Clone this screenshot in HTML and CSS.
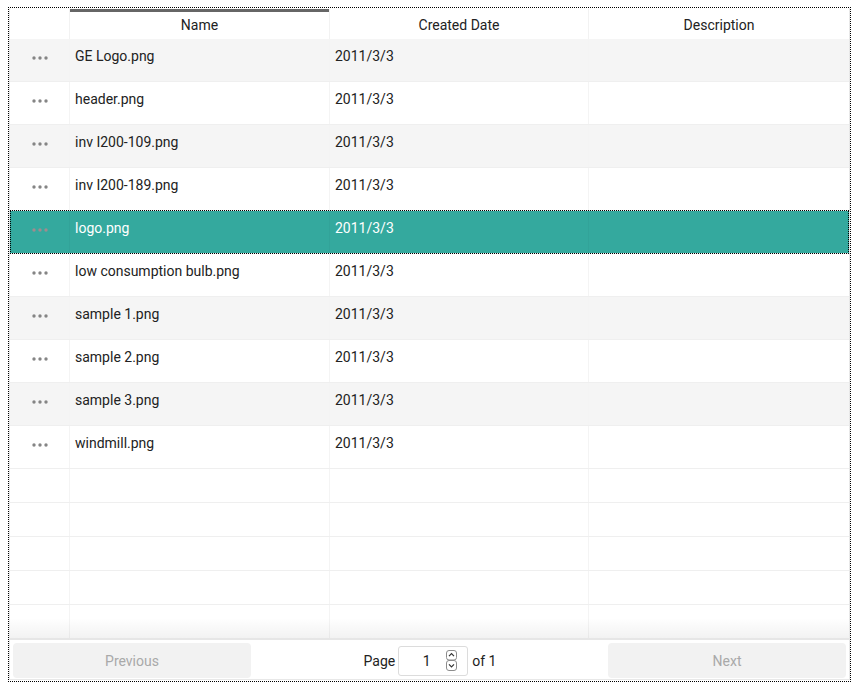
FILE: index.html
```html
<!DOCTYPE html>
<html>
<head>
<meta charset="utf-8">
<link rel="stylesheet" href="styles.css">
</head>
<body>
<div class="frame">
  <div class="grid">
    <div class="head">
      <div class="hcell"></div>
      <div class="hcell sorted">Name</div>
      <div class="hcell">Created Date</div>
      <div class="hcell last">Description</div>
    </div>
    <div class="body">
      <div class="row alt"><div class="cell act"><svg class="dots" width="16" height="4" viewBox="0 0 16 4"><circle cx="2" cy="2" r="1.7"/><circle cx="8" cy="2" r="1.7"/><circle cx="14" cy="2" r="1.7"/></svg></div><div class="cell">GE Logo.png</div><div class="cell">2011/3/3</div><div class="cell last"></div></div>
      <div class="row"><div class="cell act"><svg class="dots" width="16" height="4" viewBox="0 0 16 4"><circle cx="2" cy="2" r="1.7"/><circle cx="8" cy="2" r="1.7"/><circle cx="14" cy="2" r="1.7"/></svg></div><div class="cell">header.png</div><div class="cell">2011/3/3</div><div class="cell last"></div></div>
      <div class="row alt"><div class="cell act"><svg class="dots" width="16" height="4" viewBox="0 0 16 4"><circle cx="2" cy="2" r="1.7"/><circle cx="8" cy="2" r="1.7"/><circle cx="14" cy="2" r="1.7"/></svg></div><div class="cell">inv I200-109.png</div><div class="cell">2011/3/3</div><div class="cell last"></div></div>
      <div class="row"><div class="cell act"><svg class="dots" width="16" height="4" viewBox="0 0 16 4"><circle cx="2" cy="2" r="1.7"/><circle cx="8" cy="2" r="1.7"/><circle cx="14" cy="2" r="1.7"/></svg></div><div class="cell">inv I200-189.png</div><div class="cell">2011/3/3</div><div class="cell last"></div></div>
      <div class="row selected"><div class="cell act"><svg class="dots" width="16" height="4" viewBox="0 0 16 4"><circle cx="2" cy="2" r="1.7"/><circle cx="8" cy="2" r="1.7"/><circle cx="14" cy="2" r="1.7"/></svg></div><div class="cell">logo.png</div><div class="cell">2011/3/3</div><div class="cell last"></div></div>
      <div class="row"><div class="cell act"><svg class="dots" width="16" height="4" viewBox="0 0 16 4"><circle cx="2" cy="2" r="1.7"/><circle cx="8" cy="2" r="1.7"/><circle cx="14" cy="2" r="1.7"/></svg></div><div class="cell">low consumption bulb.png</div><div class="cell">2011/3/3</div><div class="cell last"></div></div>
      <div class="row alt"><div class="cell act"><svg class="dots" width="16" height="4" viewBox="0 0 16 4"><circle cx="2" cy="2" r="1.7"/><circle cx="8" cy="2" r="1.7"/><circle cx="14" cy="2" r="1.7"/></svg></div><div class="cell">sample 1.png</div><div class="cell">2011/3/3</div><div class="cell last"></div></div>
      <div class="row"><div class="cell act"><svg class="dots" width="16" height="4" viewBox="0 0 16 4"><circle cx="2" cy="2" r="1.7"/><circle cx="8" cy="2" r="1.7"/><circle cx="14" cy="2" r="1.7"/></svg></div><div class="cell">sample 2.png</div><div class="cell">2011/3/3</div><div class="cell last"></div></div>
      <div class="row alt"><div class="cell act"><svg class="dots" width="16" height="4" viewBox="0 0 16 4"><circle cx="2" cy="2" r="1.7"/><circle cx="8" cy="2" r="1.7"/><circle cx="14" cy="2" r="1.7"/></svg></div><div class="cell">sample 3.png</div><div class="cell">2011/3/3</div><div class="cell last"></div></div>
      <div class="row"><div class="cell act"><svg class="dots" width="16" height="4" viewBox="0 0 16 4"><circle cx="2" cy="2" r="1.7"/><circle cx="8" cy="2" r="1.7"/><circle cx="14" cy="2" r="1.7"/></svg></div><div class="cell">windmill.png</div><div class="cell">2011/3/3</div><div class="cell last"></div></div>
      <div class="row empty"><div class="cell"></div><div class="cell"></div><div class="cell"></div><div class="cell last"></div></div>
      <div class="row empty"><div class="cell"></div><div class="cell"></div><div class="cell"></div><div class="cell last"></div></div>
      <div class="row empty"><div class="cell"></div><div class="cell"></div><div class="cell"></div><div class="cell last"></div></div>
      <div class="row empty"><div class="cell"></div><div class="cell"></div><div class="cell"></div><div class="cell last"></div></div>
      <div class="row empty"><div class="cell"></div><div class="cell"></div><div class="cell"></div><div class="cell last"></div></div>
      <div class="fade"></div>
    </div>
    <div class="pager">
      <div class="btn">Previous</div>
      <div class="pageinfo">
        <span class="lbl">Page</span>
        <div class="pagebox">
          <span class="num">1</span>
          <svg class="spin" width="11" height="21" viewBox="0 0 11 21">
            <rect x="0.5" y="0.5" width="10" height="9.5" rx="2.5" fill="#fff" stroke="#8c8c8c"/>
            <rect x="0.5" y="10.5" width="10" height="10" rx="2.5" fill="#fff" stroke="#8c8c8c"/>
            <path d="M3 6.2 L5.5 3.7 L8 6.2" fill="none" stroke="#333" stroke-width="1.2"/>
            <path d="M3 14.3 L5.5 16.8 L8 14.3" fill="none" stroke="#333" stroke-width="1.2"/>
          </svg>
        </div>
        <span class="lbl">of 1</span>
      </div>
      <div class="btn">Next</div>
    </div>
  </div>
</div>
</body>
</html>
```
FILE: styles.css
```css
html, body {
  margin: 0;
  padding: 0;
  background: #fff;
}
body {
  font-family: Roboto, "Liberation Sans", sans-serif;
  font-size: 14px;
  color: #222;
}
.frame {
  margin: 7px 0 0 8px;
  width: 841px;
  height: 673px;
  border: 1px dotted #000;
}
.grid {
  height: 671px;
  border: 1px solid #e8e8e8;
  border-top: none;
  display: flex;
  flex-direction: column;
}
.head, .row {
  display: grid;
  grid-template-columns: 60px 260px 259px 260px;
}
.head {
  height: 31px;
  flex: none;
}
.hcell {
  border-right: 1px solid #f2f2f2;
  text-align: center;
  padding-top: 8px;
  line-height: 16px;
  margin-top: 1px;
}
.hcell.sorted {
  background: linear-gradient(#666, #666) no-repeat 0 0 / 100% 3px;
}
.hcell.last, .cell.last {
  border-right: none;
}
.body {
  position: relative;
  height: 599px;
  flex: none;
  overflow: hidden;
}
.row {
  height: 42px;
  border-bottom: 1px solid #efefef;
  position: relative;
}
.row.empty {
  height: 33px;
}
.row.alt {
  background: #f5f5f5;
}
.cell {
  border-right: 1px solid #f4f4f4;
  padding: 9px 5px 0;
  line-height: 16px;
  white-space: nowrap;
}
.cell.act {
  display: flex;
  justify-content: center;
  padding: 17px 0 0;
}
.dots {
  fill: #858585;
  margin-left: 1px;
}
.row.selected {
  background: #34a99e;
  color: #fff;
}
.row.selected .cell {
  border-right-color: rgba(0, 0, 0, 0.03);
}
.row.selected .dots {
  fill: #a08c8e;
}
.row.selected::after {
  content: "";
  position: absolute;
  left: 0;
  right: 0;
  top: -1px;
  bottom: -1px;
  border: 1px dotted #000;
  pointer-events: none;
}
.fade {
  position: absolute;
  left: 0;
  right: 0;
  bottom: 0;
  height: 20px;
  background: linear-gradient(to bottom, rgba(0, 0, 0, 0), rgba(0, 0, 0, 0.05));
}
.pager {
  border-top: 2px solid #e6e6e6;
  flex: 1;
  display: flex;
  align-items: flex-start;
  padding: 3px 3px 0;
}
.btn {
  width: 238px;
  height: 35px;
  background: #f2f2f2;
  border-radius: 4px;
  color: #a9a9a9;
  display: flex;
  align-items: center;
  justify-content: center;
}
.pageinfo {
  flex: 1;
  height: 35px;
  display: flex;
  align-items: center;
  justify-content: center;
  padding-left: 1px;
}
.pagebox {
  width: 68px;
  height: 28px;
  border: 1px solid #dcdcdc;
  border-radius: 3px;
  margin: 0 4px 0 3px;
  display: flex;
  align-items: center;
}
.num {
  flex: 1;
  text-align: center;
  padding-left: 8px;
}
.spin {
  margin-right: 10px;
  display: block;
}
```
